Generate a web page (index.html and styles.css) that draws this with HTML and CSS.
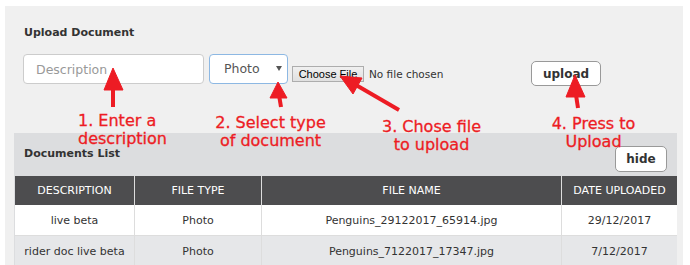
FILE: index.html
```html
<!DOCTYPE html>
<html>
<head>
	<title>Documents</title>
	<link rel="stylesheet" href="styles.css">
</head>
<body>

<div class="page">
  <div class="panel">
    <div class="upload">
      <h4 class="title">Upload Document</h4>
      <div class="form-row">
        <input class="desc" type="text" placeholder="Description">
        <div class="select"><span>Photo</span></div>
        <div class="file">
          <span class="file-btn">Choose File</span>
          <span class="file-name">No file chosen</span>
        </div>
        <button class="btn upload-btn">upload</button>
      </div>
    </div>

    <div class="docs">
      <div class="docs-head">
        <h4 class="title">Documents List</h4>
        <button class="btn hide-btn">hide</button>
      </div>
      <table class="docs-table">
        <thead>
          <tr>
            <th class="c1">DESCRIPTION</th>
            <th class="c2">FILE TYPE</th>
            <th class="c3">FILE NAME</th>
            <th class="c4">DATE UPLOADED</th>
          </tr>
        </thead>
        <tbody>
          <tr>
            <td>live beta</td>
            <td>Photo</td>
            <td>Penguins_29122017_65914.jpg</td>
            <td>29/12/2017</td>
          </tr>
          <tr class="alt">
            <td>rider doc live beta</td>
            <td>Photo</td>
            <td>Penguins_7122017_17347.jpg</td>
            <td>7/12/2017</td>
          </tr>
        </tbody>
      </table>
    </div>
  </div>

  <!-- notas en rojo encima de la pantalla -->
  <div class="note note-1">1. Enter a<br>description</div>
  <div class="note note-2">2. Select type<br>of document</div>
  <div class="note note-3">3. Chose file<br>to upload</div>
  <div class="note note-4">4. Press to<br>Upload</div>

  <svg class="arrows" width="690" height="265" viewBox="0 0 690 265">
    <g fill="#ed1c24" stroke="#ed1c24" stroke-width="4">
      <line x1="113" y1="88" x2="113" y2="107"/>
      <polygon stroke-width="1" points="113,68 104,90 123,90"/>

      <line x1="279" y1="95" x2="281" y2="107"/>
      <polygon stroke-width="1" points="278,82 270,98 287,98"/>

      <line x1="356" y1="85" x2="399" y2="110"/>
      <polygon stroke-width="1" points="340,76 362,78 353,94"/>

      <line x1="576" y1="95" x2="578" y2="108"/>
      <polygon stroke-width="1" points="575,75 566,97 585,97"/>
    </g>
  </svg>
</div>

</body>
</html>
```

FILE: styles.css
```css
body {
    margin: 0;
    background: #fff;
    font-family: "DejaVu Sans", Verdana, sans-serif;
    color: #333;
}

.page {
    position: relative;
    width: 690px;
    height: 265px;
    overflow: hidden;
}

.panel {
    margin: 6px 7px 0 5px;
    padding: 20px 6px 0 9px;
    background: #f0f0f0;
}

.title {
    margin: 0;
    font-size: 11px;
    line-height: 13px;
    font-weight: bold;
    color: #333;
}

.upload {
    padding-left: 9px;
}

.upload .title {
    padding-left: 1px;
}

.form-row {
    display: flex;
    align-items: flex-start;
    height: 30px;
    margin-top: 15px;
}

.desc {
    box-sizing: border-box;
    width: 181px;
    height: 30px;
    margin: 0;
    padding: 0 0 0 12px;
    border: 1px solid #ccc;
    border-radius: 4px;
    background: #fff;
    font-family: inherit;
    font-size: 12.5px;
    outline: none;
}

.desc::placeholder {
    color: #999;
}

.select {
    position: relative;
    box-sizing: border-box;
    width: 79px;
    height: 30px;
    margin-left: 5px;
    padding-left: 14px;
    border: 1px solid #8db8e3;
    border-radius: 4px;
    background: #fff;
    font-size: 12.5px;
    line-height: 28px;
    color: #555;
}

.select:after {
    content: "";
    position: absolute;
    right: 5px;
    top: 11px;
    border-left: 3px solid transparent;
    border-right: 3px solid transparent;
    border-top: 5px solid #555;
}

.file {
    display: flex;
    align-items: center;
    width: 239px;
    margin-left: 4px;
    margin-top: 12px;
}

.file-btn {
    box-sizing: border-box;
    width: 72px;
    height: 16px;
    border: 1px solid #adadad;
    background: linear-gradient(#f0f0f0, #e0e0e0);
    font-family: "Liberation Sans", Arial, sans-serif;
    font-size: 11px;
    line-height: 14px;
    text-align: center;
    color: #000;
}

.file-name {
    margin-left: 5px;
    font-size: 10.5px;
    color: #333;
}

.btn {
    box-sizing: border-box;
    margin: 0;
    padding: 0;
    border: 1px solid #999;
    border-radius: 5px;
    background: #fff;
    font-family: inherit;
    font-size: 12px;
    font-weight: bold;
    color: #333;
}

.upload-btn {
    width: 70px;
    height: 25px;
    margin-top: 7px;
}

.docs {
    margin-top: 49px;
    background: #dcdddf;
}

.docs-head {
    display: flex;
    justify-content: space-between;
    align-items: flex-start;
    padding: 13px 10px 4px 10px;
}

.docs-head .title {
    margin-top: 1px;
}

.hide-btn {
    width: 52px;
    height: 26px;
}

.docs-table {
    width: 662px;
    margin: 0 1px;
    border-collapse: separate;
    border-spacing: 0;
    table-layout: fixed;
    font-size: 11px;
}

.docs-table th,
.docs-table td {
    box-sizing: border-box;
    padding: 0;
    text-align: center;
    border-left: 1px solid #dddddd;
}

.docs-table th:first-child,
.docs-table td:first-child {
    border-left: none;
}

.docs-table th {
    height: 29px;
    background: #4d4d4f;
    color: #fff;
    font-weight: normal;
}

.docs-table th.c1 { width: 119px; }
.docs-table th.c2 { width: 127px; }
.docs-table th.c3 { width: 300px; }
.docs-table th.c4 { width: 116px; }

.docs-table td {
    height: 31px;
    background: #fff;
    border-bottom: 1px solid #dddddd;
    color: #333;
}

.docs-table tr.alt td {
    background: #e6e7e9;
}

.note {
    position: absolute;
    font-size: 16px;
    line-height: 18px;
    color: #ed1c24;
    white-space: nowrap;
    -webkit-text-stroke: 0.3px #ed1c24;
}

.note-1 {
    left: 78px;
    top: 112px;
}

.note-2,
.note-3,
.note-4 {
    width: 121px;
    text-align: center;
}

.note-2 {
    left: 210px;
    top: 114px;
}

.note-3 {
    left: 371px;
    top: 118px;
}

.note-4 {
    left: 533px;
    top: 115px;
}

.arrows {
    position: absolute;
    left: 0;
    top: 0;
    pointer-events: none;
}
```
